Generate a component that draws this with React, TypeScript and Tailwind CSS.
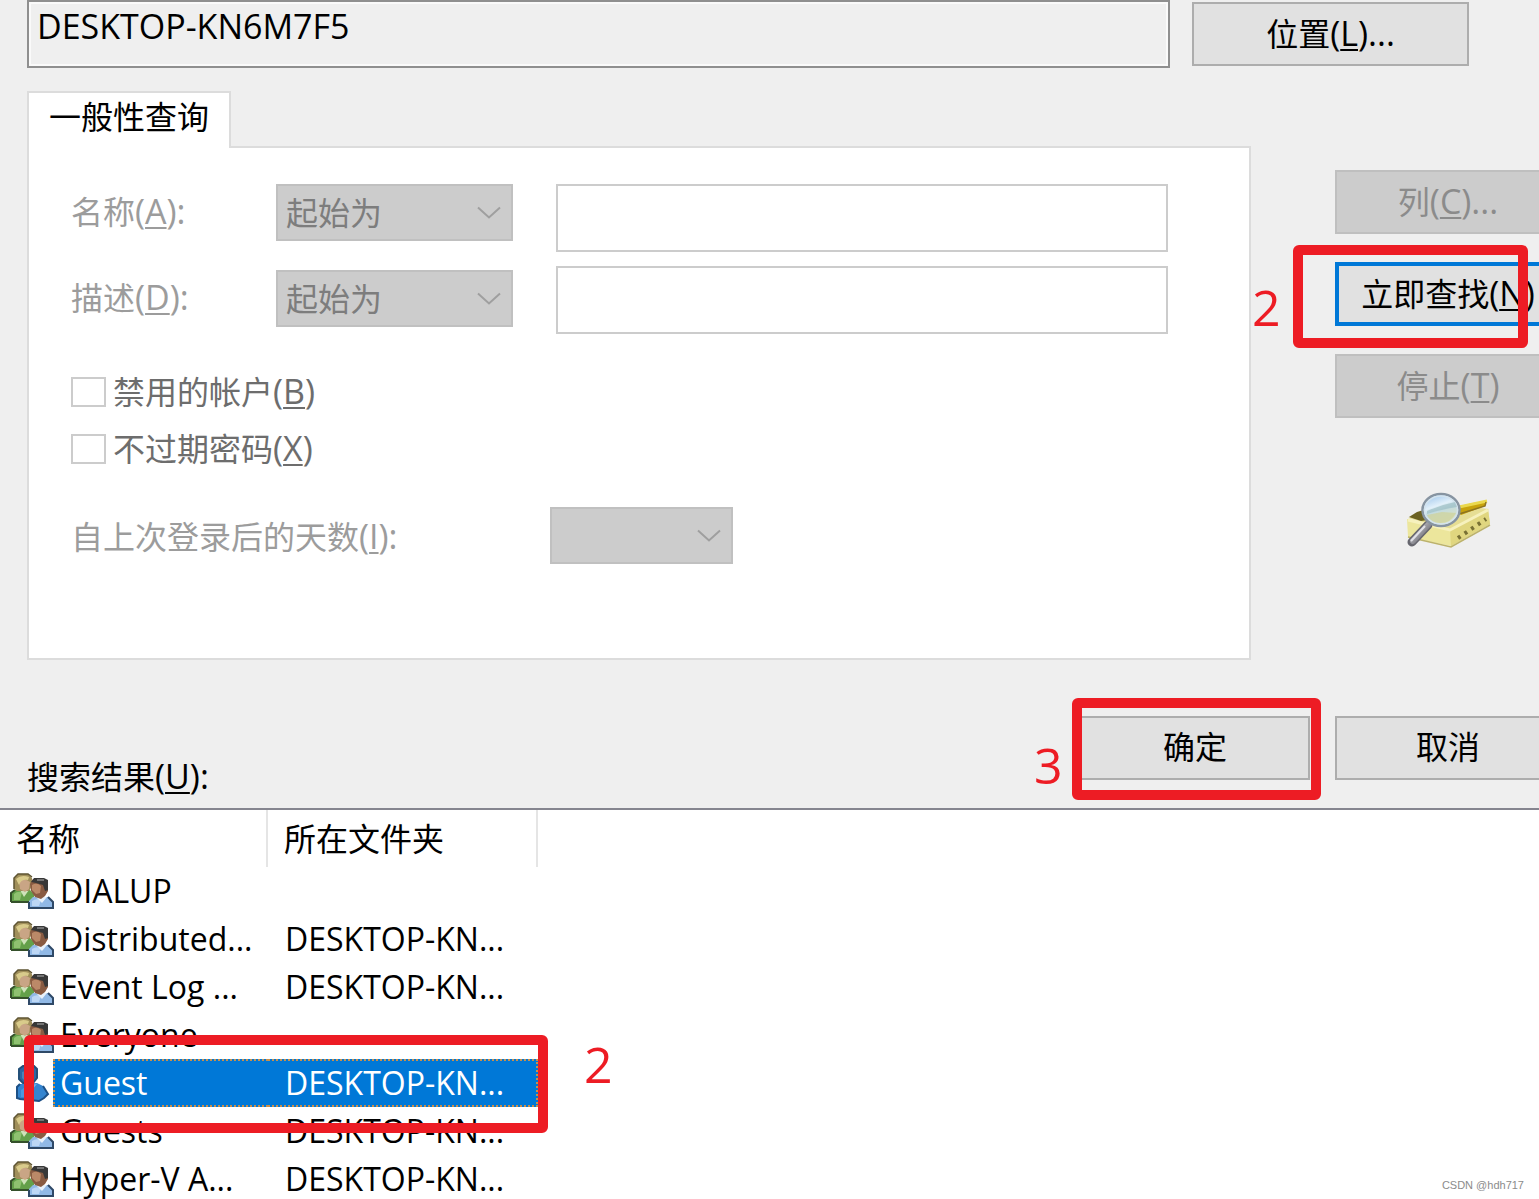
import React from "react";

const FONT = "font-['Open_Sans','Noto_Sans_CJK_SC',sans-serif]";

function Key({ children }: { children: string }) {
  return (
    <>
      (<span className="underline decoration-2 underline-offset-3">{children}</span>)
    </>
  );
}

function Chevron() {
  return (
    <svg viewBox="0 0 24 14" className="pointer-events-none absolute top-[22px] right-3 h-[14px] w-6" fill="none" stroke="#9f9f9f" strokeWidth="2">
      <path d="M1 1.5 12 11.5 23 1.5" />
    </svg>
  );
}

function Drop({ id, width, option }: { id: string; width: string; option?: string }) {
  return (
    <div className={`relative h-[57px] shrink-0 ${width}`}>
      <select
        id={id}
        disabled
        className="h-full w-full appearance-none border-2 border-[#c0c0c0] bg-[#cccccc] px-2 text-[32px] leading-10 text-[#7d7d7d] opacity-100"
      >
        {option ? <option>{option}</option> : <option aria-label="空" />}
      </select>
      <Chevron />
    </div>
  );
}

function Latin({ children }: { children: React.ReactNode }) {
  return <span className="text-[34px]">{children}</span>;
}

function QueryRow({ id, label, k }: { id: string; label: string; k: string }) {
  return (
    <div className="flex items-center">
      <label htmlFor={id} className="w-[205px] shrink-0 pb-0.5 text-[32px] leading-10 text-[#9c9c9c]">
        {label}
        <Latin>
          <Key>{k}</Key>:
        </Latin>
      </label>
      <Drop id={id} width="w-[237px]" option="起始为" />
    </div>
  );
}

function Check({ id, label, k }: { id: string; label: string; k: string }) {
  return (
    <div className="flex h-[57px] items-center gap-[7px]">
      <input id={id} type="checkbox" disabled className="h-[30px] w-[35px] appearance-none border-2 border-[#cccccc] bg-white" />
      <label htmlFor={id} className="text-[32px] leading-10 text-[#6d6d6d]">
        {label}
        <Latin>
          <Key>{k}</Key>
        </Latin>
      </label>
    </div>
  );
}

function PushButton({ children, tone }: { children: React.ReactNode; tone: "normal" | "disabled" | "focus" }) {
  const styles = {
    normal: "border-2 border-[#adadad] bg-[#e1e1e1] text-black",
    disabled: "border-2 border-[#bfbfbf] bg-[#cccccc] text-[#8b8b8b]",
    focus: "border-4 border-[#0078d7] bg-[#e1e1e1] text-black",
  };
  return (
    <button
      disabled={tone === "disabled"}
      className={`flex h-16 w-full items-center justify-center pb-0.5 text-[32px] leading-10 whitespace-nowrap ${styles[tone]}`}
    >
      <span>{children}</span>
    </button>
  );
}

function SearchIcon() {
  return (
    <svg viewBox="0 0 88 58" className="h-[58px] w-[88px]">
      <defs>
        <linearGradient id="lens" x1="0" y1="0" x2="0.4" y2="1">
          <stop offset="0" stopColor="#8fbce8" />
          <stop offset="0.45" stopColor="#e2f0fa" />
          <stop offset="0.6" stopColor="#c3dbe0" />
          <stop offset="1" stopColor="#dfe4bd" />
        </linearGradient>
        <linearGradient id="handle" x1="0" y1="0" x2="1" y2="1">
          <stop offset="0" stopColor="#d8d8dd" />
          <stop offset="1" stopColor="#55555d" />
        </linearGradient>
      </defs>
      <path d="M3 26 42 12 84 17 46 38Z" fill="#e6de94" />
      <path d="M4 25 12 20 22 17 30 27 16 29Z" fill="#6b6121" />
      <path d="M50 15 68 11 80 9 80 14 56 23Z" fill="#c7a20c" />
      <path d="M54 15 82 9" stroke="#ead84d" strokeWidth="3" />
      <path d="M54 22 80 14 81 10" stroke="#8d7420" strokeWidth="1.5" fill="none" />
      <path d="M2 27 45 37 83 17 85 32 46 54 3 45Z" fill="#ece69c" />
      <path d="M45 37 83 17 85 32 46 54Z" fill="#e0d67f" />
      <path d="M3 28 45 38 83 18" stroke="#f6f1bd" strokeWidth="3" fill="none" />
      <path d="M53 46 81 27" stroke="#787034" strokeWidth="4" strokeDasharray="3 5" />
      <path d="M3 45 46 55 85 33" stroke="#bcb26a" strokeWidth="1.5" fill="none" />
      <path d="m23 33-16 17" stroke="#66666e" strokeWidth="9" strokeLinecap="round" />
      <path d="m24 32-16 17" stroke="url(#handle)" strokeWidth="6" strokeLinecap="round" />
      <path d="m20 34-14 15" stroke="#e0e0e7" strokeWidth="2" />
      <ellipse cx="36" cy="18" rx="18.5" ry="16" fill="url(#lens)" stroke="#8794a1" strokeWidth="2.5" />
      <ellipse cx="36" cy="18" rx="16.5" ry="14" fill="none" stroke="#d3e3ee" strokeWidth="1.5" />
      <path d="M22 19Q35 13 50 10L52 15Q38 17 22 22Z" fill="#9dbfc5" opacity=".7" />
      <path d="M22 23 37 20 51 21Q46 31 35 31 25 30 22 23Z" fill="#ced3a0" opacity=".8" />
    </svg>
  );
}

function GroupIcon() {
  return (
    <svg viewBox="0 0 44 38" className="h-[38px] w-11 shrink-0">
      <path d="M1 30V21L5 18H20L24 22V30Z" fill="#64a04a" />
      <path d="M1 30V21L5 18M1 30H20" stroke="#35512b" strokeWidth="2" fill="none" />
      <path d="M4 22Q7 19 12 20L10 28H4Z" fill="#8fc270" />
      <path d="M10 18 14 25 19 18Z" fill="#cfe2ba" />
      <path d="M4 17V6L8 2H18L22 6V14L19 19H7Z" fill="#a08f5a" />
      <path d="M4 17V6L8 2H18L22 5" stroke="#5e5432" strokeWidth="1.5" fill="none" />
      <path d="M9 9Q15 6 20 10L19 17 15 20 10 17Z" fill="#c9a585" />
      <path d="M6 7Q11 2 19 5L18 8Q11 7 9 13Z" fill="#d9cb8b" />
      <path d="M19 36V29L23 25H38L43 30V36Z" fill="#91b9e6" />
      <path d="M19 30V36H43V30L38 25" stroke="#2f4967" strokeWidth="2" fill="none" />
      <path d="M22 29Q26 26 31 28L29 34H22Z" fill="#bdd7f5" />
      <path d="m26 25 6 6 5-6Z" fill="#e8f1fa" />
      <path d="M20 12 23 7H34L38 10V19L35 24 31 27 25 25 21 19Z" fill="#895b42" />
      <path d="M22 13Q27 10 31 14L30 21 26 22 22 18Z" fill="#bb8968" />
      <path d="M21 10 24 6H34L38 8V18L35 19 33 13 26 11Z" fill="#383838" />
      <path d="M27 8H34" stroke="#747474" strokeWidth="2" />
    </svg>
  );
}

function UserIcon() {
  return (
    <svg viewBox="0 0 44 38" className="h-[38px] w-11 shrink-0">
      <path d="M7 34V23L10 20 27 19 33 22 38 30 34 34 29 37 10 35Z" fill="#3585d0" />
      <path d="M10 20 7 23V34L10 35 29 37 34 34 38 30 33 22" stroke="#1d5086" strokeWidth="2" fill="none" />
      <path d="M9 5 13 2H24L27 5V14L23 19H13L9 15Z" fill="#2d67a2" stroke="#245079" strokeWidth="2" />
      <path d="M12 8Q18 5 22 10L20 17 16 18 12 14Z" fill="#4b85b9" />
      <path d="M11 26Q16 21 20 25L19 33H11Z" fill="#4b98de" />
      <path d="m17 21 5 5 5-6Z" fill="#6fb0e8" />
    </svg>
  );
}

const rows = [
  { name: "DIALUP", folder: "" },
  { name: "Distributed...", folder: "DESKTOP-KN..." },
  { name: "Event Log ...", folder: "DESKTOP-KN..." },
  { name: "Everyone", folder: "" },
  { name: "Guest", folder: "DESKTOP-KN...", selected: true },
  { name: "Guests", folder: "DESKTOP-KN..." },
  { name: "Hyper-V A...", folder: "DESKTOP-KN..." },
];

const MARK = "pointer-events-none absolute z-20 rounded-md border-10 border-[#ed1c24]";
const DIGIT = "pointer-events-none absolute z-20 text-[50px] leading-[50px] text-[#ed1c24]";
const TEXT_FIELD = "h-[68px] w-full border-2 border-[#cccccc] bg-white px-2 text-[32px]";

export default function App() {
  return (
    <main className={`relative flex h-screen flex-col overflow-hidden bg-[#efefef] text-black ${FONT}`}>
      <header className="flex shrink-0 items-start gap-[22px] pr-[70px] pl-[27px]">
        <input
          aria-label="查找位置"
          readOnly
          value="DESKTOP-KN6M7F5"
          className="h-[68px] min-w-0 flex-1 border-2 border-[#8f8f8f] bg-[#efefef] px-2 pb-4 text-[34px] leading-10 shadow-[inset_0_0_0_2px_#fafafa] outline-none"
        />
        <div className="w-[277px] shrink-0 pt-0.5">
          <PushButton tone="normal">
            位置<Latin><Key>L</Key>...</Latin>
          </PushButton>
        </div>
      </header>

      <div className="-mr-[22px] flex shrink-0 gap-[84px] pt-[23px] pl-[27px]">
        <section className="flex min-w-0 flex-1 flex-col">
          <div role="tablist" className="relative z-10 -mb-0.5 flex">
            <button role="tab" aria-selected="true" className="h-[57px] border-2 border-b-0 border-[#dcdcdc] bg-white px-5 pb-2 text-[32px] leading-10">
              一般性查询
            </button>
          </div>
          <div role="tabpanel" className="h-[514px] border-2 border-[#dcdcdc] bg-white pt-9 pr-[81px] pl-[42px]">
            <div className="flex gap-[43px]">
              <div className="flex flex-col gap-[29px]">
                <QueryRow id="name" label="名称" k="A" />
                <QueryRow id="description" label="描述" k="D" />
              </div>
              <div className="flex min-w-0 flex-1 flex-col gap-[14px]">
                <input aria-label="名称" disabled className={TEXT_FIELD} />
                <input aria-label="描述" disabled className={TEXT_FIELD} />
              </div>
            </div>
            <div className="pt-[29px]">
              <Check id="disabled-account" label="禁用的帐户" k="B" />
              <Check id="non-expiring" label="不过期密码" k="X" />
            </div>
            <div className="flex items-center pt-[30px]">
              <label htmlFor="days" className="w-[479px] shrink-0 pt-0.5 text-[32px] leading-10 text-[#9c9c9c]">
                自上次登录后的天数<Latin><Key>I</Key>:</Latin>
              </label>
              <Drop id="days" width="w-[183px]" />
            </div>
          </div>
        </section>
        <aside className="flex w-[226px] shrink-0 flex-col gap-7 pt-[79px]">
          <PushButton tone="disabled">
            列<Latin><Key>C</Key>...</Latin>
          </PushButton>
          <div className="relative">
            <PushButton tone="focus">
              立即查找<Latin><Key>N</Key></Latin>
            </PushButton>
            <div className={`${MARK} -top-[17px] -left-[42px] h-[103px] w-[235px]`} />
            <span className={`${DIGIT} top-5 -left-[83px]`}>2</span>
          </div>
          <PushButton tone="disabled">
            停止<Latin><Key>T</Key></Latin>
          </PushButton>
          <div className="pt-[46px] pl-[70px]">
            <SearchIcon />
          </div>
        </aside>
      </div>

      <div className="-mr-[22px] flex shrink-0 items-start pt-[56px] pb-[11px] pl-[27px]">
        <h2 className="flex-1 pt-10 text-[32px] leading-10">
          搜索结果<Latin><Key>U</Key>:</Latin>
        </h2>
        <div className="flex gap-[25px]">
          <div className="relative w-[230px]">
            <PushButton tone="normal">确定</PushButton>
            <div className={`${MARK} -top-[18px] -left-2 h-[102px] w-[249px]`} />
            <span className={`${DIGIT} top-6 -left-[46px]`}>3</span>
          </div>
          <div className="w-[226px]">
            <PushButton tone="normal">取消</PushButton>
          </div>
        </div>
      </div>

      <div className="flex-1 border-t-2 border-[#85858f] bg-white">
        <table className="w-[538px] table-fixed border-separate border-spacing-0 text-left">
          <thead>
            <tr className="h-[57px] text-[32px] leading-10">
              <th className="w-[268px] border-r-2 border-[#e5e5e5] p-0 pl-4 font-normal">名称</th>
              <th className="border-r-2 border-[#e5e5e5] p-0 pl-4 font-normal">所在文件夹</th>
            </tr>
          </thead>
          <tbody>
            {rows.map((r) => (
              <tr key={r.name} className={`h-12 text-[32px] leading-11 whitespace-nowrap ${r.selected ? "relative text-white" : ""}`}>
                <td className="p-0">
                  <div className="flex h-12 items-center">
                    <div className="w-[53px] shrink-0 pl-[10px]">{r.selected ? <UserIcon /> : <GroupIcon />}</div>
                    <span className={`h-12 flex-1 border-y-2 border-l-2 pl-[5px] ${r.selected ? "border-dotted border-[#c98f4b] bg-[#0078d7]" : "border-transparent"}`}>
                      {r.name}
                    </span>
                  </div>
                </td>
                <td className="p-0">
                  <span className={`block h-12 border-y-2 pl-[17px] ${r.selected ? "border-r-2 border-dotted border-[#c98f4b] bg-[#0078d7]" : "border-transparent"}`}>
                    {r.folder}
                  </span>
                  {r.selected && (
                    <>
                      <div className={`${MARK} -top-6 left-6 h-[98px] w-[524px]`} />
                      <span className={`${DIGIT} -top-5 left-[584px]`}>2</span>
                    </>
                  )}
                </td>
              </tr>
            ))}
          </tbody>
        </table>
      </div>
      <footer className="absolute right-[15px] bottom-[6px] font-['Liberation_Sans',sans-serif] text-[11px] leading-4 text-[#8b8b8b]">
        CSDN @hdh717
      </footer>
    </main>
  );
}
